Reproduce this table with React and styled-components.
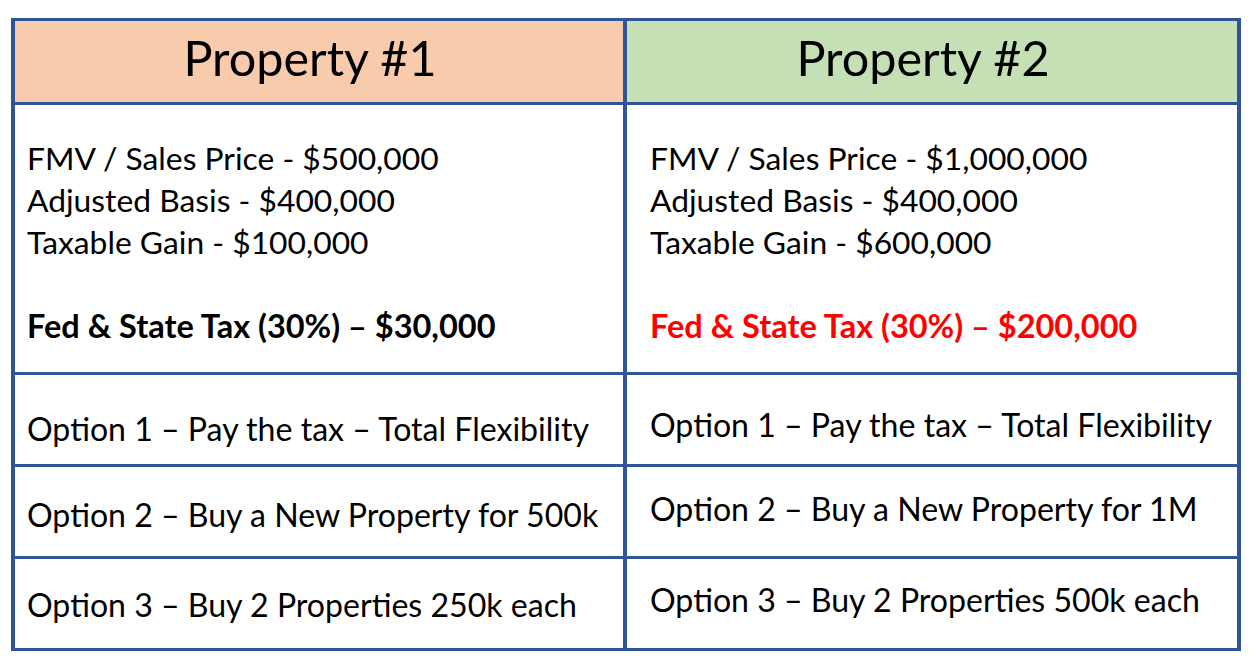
import React from 'react';
import styled, { createGlobalStyle } from 'styled-components';

const properties = [
	{
		title: 'Property #1',
		tint: '#f8cbad',
		inset: 12,
		facts: ['FMV / Sales Price - $500,000', 'Adjusted Basis - $400,000', 'Taxable Gain - $100,000'],
		tax: 'Fed & State Tax (30%) – $30,000',
		alert: false,
		options: [
			{ text: 'Option 1 – Pay the tax – Total Flexibility', shift: 9 },
			{ text: 'Option 2 – Buy a New Property for 500k', shift: 3 },
			{ text: 'Option 3 – Buy 2 Properties 250k each', shift: 1 },
		],
	},
	{
		title: 'Property #2',
		tint: '#c5e0b4',
		inset: 23,
		facts: ['FMV / Sales Price - $1,000,000', 'Adjusted Basis - $400,000', 'Taxable Gain - $600,000'],
		tax: 'Fed & State Tax (30%) – $200,000',
		alert: true,
		options: [
			{ text: 'Option 1 – Pay the tax – Total Flexibility', shift: 5 },
			{ text: 'Option 2 – Buy a New Property for 1M', shift: -3 },
			{ text: 'Option 3 – Buy 2 Properties 500k each', shift: -4 },
		],
	},
];

const App = () => {
	return (
		<>
			<S_GLOBAL />
			<S_TABLE>
				{properties.map((p) => (
					<S_HEADER key={p.title} $tint={p.tint}>
						{p.title}
					</S_HEADER>
				))}
				{properties.map((p) => (
					<S_SUMMARY key={p.title + '-summary'} $inset={p.inset}>
						{p.facts.map((f) => (
							<S_LINE key={f}>{f}</S_LINE>
						))}
						<S_LINE />
						<S_TAX $alert={p.alert}>{p.tax}</S_TAX>
					</S_SUMMARY>
				))}
				{[0, 1, 2].map((i) =>
					properties.map((p) => (
						<S_OPTION key={p.title + i} $inset={p.inset} $shift={p.options[i].shift}>
							{p.options[i].text}
						</S_OPTION>
					))
				)}
			</S_TABLE>
		</>
	);
};

const S_GLOBAL = createGlobalStyle`
	html, body {
		margin: 0;
		background: #fff;
	}
	body {
		font-family: Lato, 'Noto Sans', sans-serif;
		color: #000;
	}
`;

const S_TABLE = styled.div`
	margin: 18px 0 0 11px;
	width: 1230px;
	box-sizing: border-box;
	display: grid;
	grid-template-columns: 608px 610px;
	grid-template-rows: 81px 267px 89px 89px 89px;
	gap: 3px 4px;
	padding: 3px 4px;
	background: #2f5597;
`;

const S_HEADER = styled.div`
	background: ${(p) => p.$tint};
	display: flex;
	align-items: center;
	justify-content: center;
	padding: 0 18px 8px 0;
	font-size: 48.5px;
	line-height: 1;
`;

const S_SUMMARY = styled.div`
	background: #fff;
	padding: 32px 0 0 ${(p) => p.$inset}px;
	font-size: 31.8px;
`;

const S_LINE = styled.div`
	height: 42px;
	line-height: 42px;
	white-space: nowrap;
`;

const S_TAX = styled(S_LINE)`
	font-weight: 700;
	font-size: 32.5px;
	color: ${(p) => (p.$alert ? '#ff0000' : '#000')};
`;

const S_OPTION = styled.div`
	background: #fff;
	display: flex;
	align-items: center;
	padding-left: ${(p) => p.$inset}px;
	padding-top: ${(p) => Math.max(0, p.$shift * 2)}px;
	padding-bottom: ${(p) => Math.max(0, -p.$shift * 2)}px;
	font-size: 32.1px;
	white-space: nowrap;
`;

export default App;
